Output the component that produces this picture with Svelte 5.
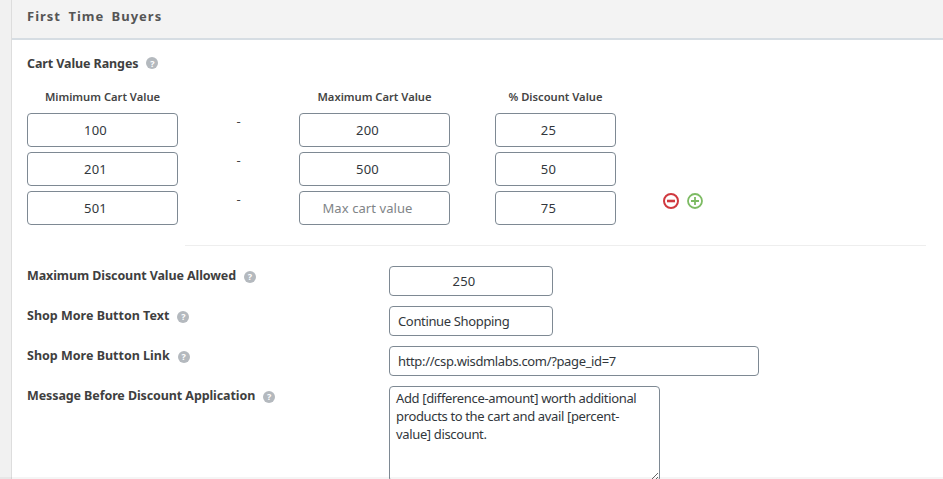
<script>
  const ranges = [
    { min: '100', max: '200', pct: '25' },
    { min: '201', max: '500', pct: '50' },
    { min: '501', max: '', pct: '75' }
  ];
  const msg = 'Add [difference-amount] worth additional products to the cart and avail [percent-value] discount.';
</script>

<div class="page">
  <div class="card">
    <h2 class="head">First Time Buyers</h2>
    <div class="body">
      <div class="title">
        <span class="lbl">Cart Value Ranges</span>
        <span class="help">?</span>
      </div>

      <div class="ranges">
        <div class="th">Mimimum Cart Value</div>
        <div></div>
        <div class="th">Maximum Cart Value</div>
        <div class="th pct">% Discount Value</div>
        <div></div>
        {#each ranges as r, i}
          <input class="inp center" value={r.min} />
          <div class="dash">-</div>
          <input class="inp center" value={r.max} placeholder="Max cart value" />
          <input class="inp center pct" value={r.pct} />
          <div class="actions">
            {#if i === ranges.length - 1}
              <svg width="18" height="18" viewBox="0 0 18 18">
                <circle cx="9" cy="9" r="7" fill="none" stroke="#d0393f" stroke-width="2" />
                <path d="M5 9h8" stroke="#d0393f" stroke-width="2.6" />
              </svg>
              <svg width="18" height="18" viewBox="0 0 18 18">
                <circle cx="9" cy="9" r="7" fill="none" stroke="#7dbb63" stroke-width="1.8" />
                <path d="M5 9h8M9 5v8" stroke="#7dbb63" stroke-width="1.8" />
              </svg>
            {/if}
          </div>
        {/each}
      </div>

      <hr class="sep" />

      <div class="row">
        <div class="side"><span class="lbl">Maximum Discount Value Allowed</span><span class="help">?</span></div>
        <input class="inp short center" value="250" />
      </div>
      <div class="row">
        <div class="side"><span class="lbl wide">Shop More Button Text</span><span class="help">?</span></div>
        <input class="inp short" value="Continue Shopping" />
      </div>
      <div class="row">
        <div class="side"><span class="lbl wide">Shop More Button Link</span><span class="help">?</span></div>
        <input class="inp long" value="http://csp.wisdmlabs.com/?page_id=7" />
      </div>
      <div class="row">
        <div class="side"><span class="lbl">Message Before Discount Application</span><span class="help">?</span></div>
        <textarea class="inp area" value={msg}></textarea>
      </div>
    </div>
  </div>
  <div class="fade"></div>
</div>

<style>
  :global(body) {
    margin: 0;
    background: #f1f1f1;
    overflow: hidden;
  }

  .page {
    position: relative;
    height: 479px;
    overflow: hidden;
    padding-left: 11px;
    box-sizing: border-box;
    font-family: "Noto Sans", "Open Sans", sans-serif;
    font-size: 13px;
    color: #444;
  }

  .card {
    height: 479px;
    overflow: hidden;
    background: #fff;
    border-left: 1px solid #ddd;
  }

  /* thin grey band along the bottom edge */
  .fade {
    position: absolute;
    left: 0;
    right: 0;
    bottom: 0;
    height: 2px;
    background: rgba(0, 0, 0, 0.04);
  }

  .head {
    margin: 0 0 0 -1px;
    height: 38px;
    line-height: 32px;
    box-sizing: border-box;
    padding-left: 15px;
    background: #f3f3f3;
    border-left: 1px solid #8db4d8;
    font-size: 13px;
    font-weight: 700;
    letter-spacing: 1px;
    word-spacing: 3px;
    color: #555;
  }

  .body {
    border-top: 2px solid #d6dde3;
    padding: 13px 0 0 15px;
  }

  .title {
    display: flex;
    align-items: center;
    height: 20px;
    margin-bottom: 11px;
  }

  .lbl {
    font-weight: 700;
    font-size: 12.5px;
    letter-spacing: -0.1px;
    color: #3f3f3f;
  }

  .lbl.wide {
    letter-spacing: 0;
  }

  .help {
    display: inline-flex;
    align-items: center;
    justify-content: center;
    width: 12px;
    height: 12px;
    margin-left: 8px;
    border-radius: 50%;
    background: #b4b9be;
    color: #fff;
    font-size: 9px;
    font-weight: 700;
    line-height: 1;
  }

  .ranges {
    display: grid;
    grid-template-columns: 151px 121px 151px 166px 120px;
    grid-template-rows: 24px repeat(3, 34px);
    row-gap: 5px;
  }

  .th {
    text-align: center;
    font-size: 11.2px;
    font-weight: 600;
    color: #444;
    line-height: 26px;
    white-space: nowrap;
  }

  .th.pct {
    width: 121px;
    margin-left: 45px;
  }

  .dash {
    text-align: center;
    line-height: 16px;
    font-size: 13px;
    color: #444;
  }

  .actions {
    display: flex;
    gap: 6px;
    padding-left: 46px;
    align-items: flex-start;
    padding-top: 1px;
  }

  .inp {
    box-sizing: border-box;
    margin: 0;
    border: 1px solid #7e8993;
    border-radius: 4px;
    background: #fff;
    color: #32373c;
    font-family: inherit;
    font-size: 13px;
    letter-spacing: -0.35px;
    padding: 0 8px;
    outline: none;
  }

  .inp::placeholder {
    color: #808487;
    letter-spacing: 0.08px;
  }

  .center {
    text-align: center;
    letter-spacing: 0.3px;
    padding-right: 22px;
  }

  .ranges .inp {
    width: 100%;
    height: 34px;
  }

  .ranges .inp.pct {
    width: 121px;
    margin-left: 45px;
  }

  .sep {
    margin: 20px 17px 0 158px;
    border: 0;
    border-top: 1px solid #eee;
    height: 0;
  }

  .row {
    display: flex;
    align-items: flex-start;
    margin-top: 10px;
  }

  .sep + .row {
    margin-top: 20px;
  }

  .side {
    width: 362px;
    flex: none;
    line-height: 18px;
  }

  .short {
    width: 164px;
    height: 30px;
  }

  .long {
    width: 370px;
    height: 30px;
  }

  .area {
    width: 271px;
    height: 96px;
    padding: 2px 6px;
    line-height: 18px;
  }
</style>
